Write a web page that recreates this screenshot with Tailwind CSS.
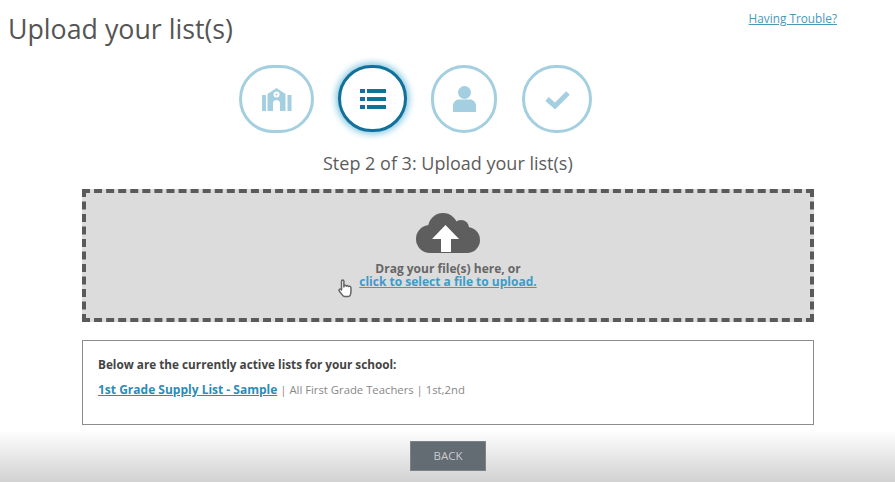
<!DOCTYPE html>
<html lang="en">
<head>
    <meta charset="UTF-8">
    <title>Upload your list(s)</title>
    <script src="https://cdn.jsdelivr.net/npm/@tailwindcss/browser@4"></script>
</head>
<body class="bg-white">
<div class="relative w-[895px] h-[482px] overflow-hidden bg-white font-['Open_Sans','Noto_Sans',sans-serif] text-[#555]">

    <!-- Bottom shading -->
    <div class="absolute left-0 right-0 bottom-0 h-[52px] bg-gradient-to-b from-white to-[#d2d2d2]"></div>

    <div class="relative flex flex-col">
        <!-- Header -->
        <div class="flex justify-between items-start h-[65px]">
            <h1 class="ml-2 mt-[10px] text-[26.750px] leading-[38px] text-[#555]">Upload your list(s)</h1>
            <a href="#" class="mr-[58px] mt-[10px] text-[11.800px] leading-4 underline text-[#4a98b8]">Having Trouble?</a>
        </div>

        <!-- Steps -->
        <div class="flex ml-[239px] h-[68px]">
            <div class="w-[75px] h-[68px] rounded-full border-[3px] border-[#a3cfe0] flex items-center justify-center">
                <svg class="mt-[1px]" width="30" height="23" viewBox="0 0 30 23" fill="#a3cfe0">
                    <path d="M0 7h4v16H0zM25.500 7h4v16h-4z"/>
                    <path d="M5.500 6L14.500 0l9 6v17H18V15c0-4-7-4-7 0v8H5.500z"/>
                    <circle cx="14.500" cy="6.500" r="3" fill="#fff"/>
                    <circle cx="14.500" cy="6.500" r="1" fill="#a3cfe0"/>
                </svg>
            </div>
            <div class="ml-6 w-[69px] h-[67px] rounded-full border-[3px] border-[#12709a] shadow-[0_0_7px_2px_#7cc4de] bg-white flex items-center justify-center">
                <svg width="26" height="20" viewBox="0 0 26 20" fill="#12709a">
                    <path d="M0 0h5v4H0zM0 8h5v4H0zM0 16h5v4H0zM7 0h19v4H7zM7 8h19v4H7zM7 16h19v4H7z"/>
                </svg>
            </div>
            <div class="ml-6 w-[66px] h-[68px] rounded-full border-[3px] border-[#a3cfe0] flex items-center justify-center">
                <svg width="23" height="26" viewBox="0 0 23 26" fill="#a3cfe0">
                    <circle cx="11.500" cy="6.500" r="6.500"/>
                    <path d="M0 26v-6c0-4 3-6.500 6-6.500h11c3 0 6 2.500 6 6.500v6z"/>
                </svg>
            </div>
            <div class="ml-[25px] w-[70px] h-[68px] rounded-full border-[3px] border-[#a3cfe0] flex items-center justify-center">
                <svg width="25" height="19" viewBox="0 0 25 19" fill="none" stroke="#a3cfe0" stroke-width="5">
                    <path d="M2 9l8 7L23 3"/>
                </svg>
            </div>
        </div>

        <p class="mt-[18px] ml-[323px] text-[18px] leading-6 text-[#5c5c5c]">Step 2 of 3: Upload your list(s)</p>

        <!-- Drop zone -->
        <div class="relative mt-[14px] ml-[82px] w-[732px] h-[133px] border-[4px] border-dashed border-[#5a5a5a] bg-[#dcdcdc] flex flex-col items-center">
            <svg class="mt-5 ml-[-1px]" width="64" height="40" viewBox="0 0 64 40">
                <g fill="#5e5e5e">
                    <circle cx="14" cy="26" r="14"/>
                    <circle cx="27" cy="15" r="15"/>
                    <circle cx="45" cy="15" r="8"/>
                    <circle cx="51" cy="27" r="13"/>
                    <rect x="14" y="15" width="37" height="25"/>
                </g>
                <path fill="#fff" d="M29.500 12L16 26h9v13h10V26h8z"/>
            </svg>
            <p class="mt-[9px] text-[12px] leading-[13px] font-bold text-[#666]">Drag your file(s) here, or</p>
            <a href="#" class="text-[12px] leading-[13px] font-bold underline text-[#3f9bc4]">click to select a file to upload.</a>
            <!-- Hand cursor -->
            <svg class="absolute left-[252px] top-[86px]" width="15" height="20" viewBox="0 0 15 20">
                <path fill="#fff" stroke="#666" stroke-width="1.500" stroke-linejoin="round" d="M3.500 11V2.200c0-1.600 2.400-1.600 2.400 0V8l.1-1c.4-1 2.100-1 2.300.2.500-.9 2-.7 2.200.4.500-.6 2.200-.5 2.400.9.200 2.500.3 5-.6 7.500-.4 1-1 1.400-2 1.400H6.500c-1 0-1.500-.5-2-1.300L1.200 12c-.8-1.400 1-2.600 2-1.500z"/>
            </svg>
        </div>

        <!-- Active lists -->
        <div class="mt-[18px] ml-[82px] w-[732px] h-[85px] border border-[#8c8c8c] bg-white pl-[15px] pt-[15px]">
            <p class="text-[11.750px] leading-4 font-bold text-[#444]">Below are the currently active lists for your school:</p>
            <p class="mt-[10px] text-[11.300px] leading-4 text-[#888]"><a href="#" class="text-[12px] font-bold underline text-[#2b8cb5]">1st Grade Supply List - Sample</a> | All First Grade Teachers | 1st,2nd</p>
        </div>

        <!-- Back button -->
        <div class="mt-4 flex justify-center ml-[1px]">
            <button class="w-[76px] h-[30px] bg-[#636b73] border border-[#7d8389] text-[11.500px] text-[#c8cccf]">BACK</button>
        </div>
    </div>
</div>
</body>
</html>
